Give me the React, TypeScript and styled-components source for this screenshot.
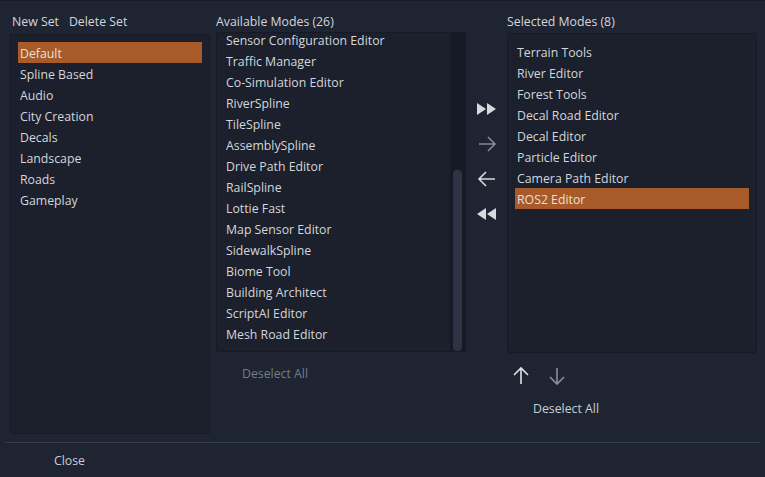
import React from 'react';
import styled, { createGlobalStyle } from 'styled-components';

const GlobalStyle = createGlobalStyle`
  html, body {
    margin: 0;
    padding: 0;
    background: #1e2431;
  }
  body {
    font-family: 'Open Sans', 'Noto Sans', sans-serif;
    font-size: 12.3px;
    color: #d3d6db;
  }
`;

const sets = ['Default', 'Spline Based', 'Audio', 'City Creation', 'Decals', 'Landscape', 'Roads', 'Gameplay'];

const available = [
  'Sensor Configuration Editor',
  'Traffic Manager',
  'Co-Simulation Editor',
  'RiverSpline',
  'TileSpline',
  'AssemblySpline',
  'Drive Path Editor',
  'RailSpline',
  'Lottie Fast',
  'Map Sensor Editor',
  'SidewalkSpline',
  'Biome Tool',
  'Building Architect',
  'ScriptAI Editor',
  'Mesh Road Editor',
];

const selected = [
  'Terrain Tools',
  'River Editor',
  'Forest Tools',
  'Decal Road Editor',
  'Decal Editor',
  'Particle Editor',
  'Camera Path Editor',
  'ROS2 Editor',
];

const Window = styled.div`
  width: 765px;
  height: 477px;
  box-sizing: border-box;
  border-top: 1px solid #161b25;
  display: flex;
  flex-direction: column;
`;

const Main = styled.div`
  display: flex;
  padding: 11px 8px 0 10px;
  height: 441px;
  box-sizing: border-box;
`;

const Panel = styled.div<{ $width: number; $gap?: number }>`
  width: ${(p) => p.$width}px;
  margin-right: ${(p) => p.$gap || 0}px;
  display: flex;
  flex-direction: column;
`;

const Header = styled.div<{ $space: number; $indent?: number }>`
  display: flex;
  gap: 10px;
  line-height: 20px;
  height: 20px;
  margin-bottom: ${(p) => p.$space}px;
  padding-left: ${(p) => p.$indent || 0}px;
  color: #d3d6db;
  white-space: nowrap;
`;

const ListBox = styled.div<{ $height: number }>`
  position: relative;
  height: ${(p) => p.$height}px;
  box-sizing: border-box;
  background: #1b202c;
  border: 1px solid #151a24;
  border-radius: 3px;
  overflow: hidden;
  padding: 7px 7px;
`;

const ScrollInner = styled.div`
  margin-top: -11px;
  padding-right: 14px;
`;

const Item = styled.div<{ $active?: boolean }>`
  height: 21px;
  box-sizing: border-box;
  line-height: 19px;
  padding: 2px 0 0 2px;
  white-space: nowrap;
  background: ${(p) => (p.$active ? '#a85a28' : 'transparent')};
  color: ${(p) => (p.$active ? '#e6e1dc' : '#d3d6db')};
`;

const Track = styled.div`
  position: absolute;
  top: 0;
  right: 0;
  bottom: 0;
  width: 15px;
  background: #151a24;
`;

const Thumb = styled.div`
  position: absolute;
  left: 3px;
  width: 9px;
  top: 137px;
  height: 181px;
  border-radius: 4px;
  background: #2b3344;
`;

const TextButton = styled.button<{ $disabled?: boolean; $indent: number; $top?: number }>`
  background: none;
  border: none;
  font: inherit;
  padding: 0;
  text-align: left;
  align-self: flex-start;
  margin-left: ${(p) => p.$indent}px;
  margin-top: ${(p) => p.$top || 0}px;
  color: ${(p) => (p.$disabled ? '#767c87' : '#c9cdd3')};
  height: 20px;
  line-height: 20px;
  cursor: pointer;
`;

const ArrowColumn = styled.div`
  width: 41px;
  display: flex;
  flex-direction: column;
  align-items: center;
  padding-top: 79px;
`;

const IconButton = styled.button`
  background: none;
  border: none;
  padding: 0;
  width: 30px;
  height: 35px;
  display: flex;
  align-items: center;
  justify-content: center;
  cursor: pointer;
`;

const OrderRow = styled.div`
  display: flex;
  gap: 16px;
  margin: 13px 0 0 4px;
`;

const Footer = styled.div`
  margin: 0 5px;
  border-top: 1px solid #353d4c;
  flex: 1;
  display: flex;
  align-items: flex-start;
  padding-left: 49px;
  padding-top: 8px;
`;

const DoubleRight = () => (
  <svg width="19" height="12" viewBox="0 0 19 12">
    <polygon points="0,0 9,6 0,12" fill="#d6d9de" />
    <polygon points="10,0 19,6 10,12" fill="#d6d9de" />
  </svg>
);

const DoubleLeft = () => (
  <svg width="19" height="12" viewBox="0 0 19 12">
    <polygon points="9,0 0,6 9,12" fill="#d6d9de" />
    <polygon points="19,0 10,6 19,12" fill="#d6d9de" />
  </svg>
);

const Arrow = ({ dir, color }: { dir: 'left' | 'right' | 'up' | 'down'; color: string }) => {
  const rot = { right: 0, down: 90, left: 180, up: 270 }[dir];
  return (
    <svg width="20" height="20" viewBox="0 0 20 20" style={{ transform: `rotate(${rot}deg)` }}>
      <path d="M2 10h16M11 3l7 7-7 7" fill="none" stroke={color} strokeWidth="1.6" />
    </svg>
  );
};

export default function App() {
  return (
    <>
      <GlobalStyle />
      <Window>
        <Main>
          <Panel $width={200} $gap={6}>
            <Header $space={2} $indent={2}>
              <span>New Set</span>
              <span>Delete Set</span>
            </Header>
            <ListBox $height={400}>
              {sets.map((s, i) => (
                <Item key={s} $active={i === 0}>
                  {s}
                </Item>
              ))}
            </ListBox>
          </Panel>

          <Panel $width={250}>
            <Header $space={0}>Available Modes (26)</Header>
            <ListBox $height={320}>
              <ScrollInner>
                {available.map((s) => (
                  <Item key={s}>{s}</Item>
                ))}
              </ScrollInner>
              <Track>
                <Thumb />
              </Track>
            </ListBox>
            <TextButton $disabled $indent={26} $top={12}>
              Deselect All
            </TextButton>
          </Panel>

          <ArrowColumn>
            <IconButton>
              <DoubleRight />
            </IconButton>
            <IconButton>
              <Arrow dir="right" color="#848a95" />
            </IconButton>
            <IconButton>
              <Arrow dir="left" color="#d6d9de" />
            </IconButton>
            <IconButton>
              <DoubleLeft />
            </IconButton>
          </ArrowColumn>

          <Panel $width={250}>
            <Header $space={1}>Selected Modes (8)</Header>
            <ListBox $height={320}>
              {selected.map((s, i) => (
                <Item key={s} $active={i === selected.length - 1}>
                  {s}
                </Item>
              ))}
            </ListBox>
            <OrderRow>
              <Arrow dir="up" color="#e0e2e6" />
              <Arrow dir="down" color="#8a909a" />
            </OrderRow>
            <TextButton $indent={26} $top={13}>
              Deselect All
            </TextButton>
          </Panel>
        </Main>
        <Footer>
          <TextButton $indent={0}>Close</TextButton>
        </Footer>
      </Window>
    </>
  );
}
